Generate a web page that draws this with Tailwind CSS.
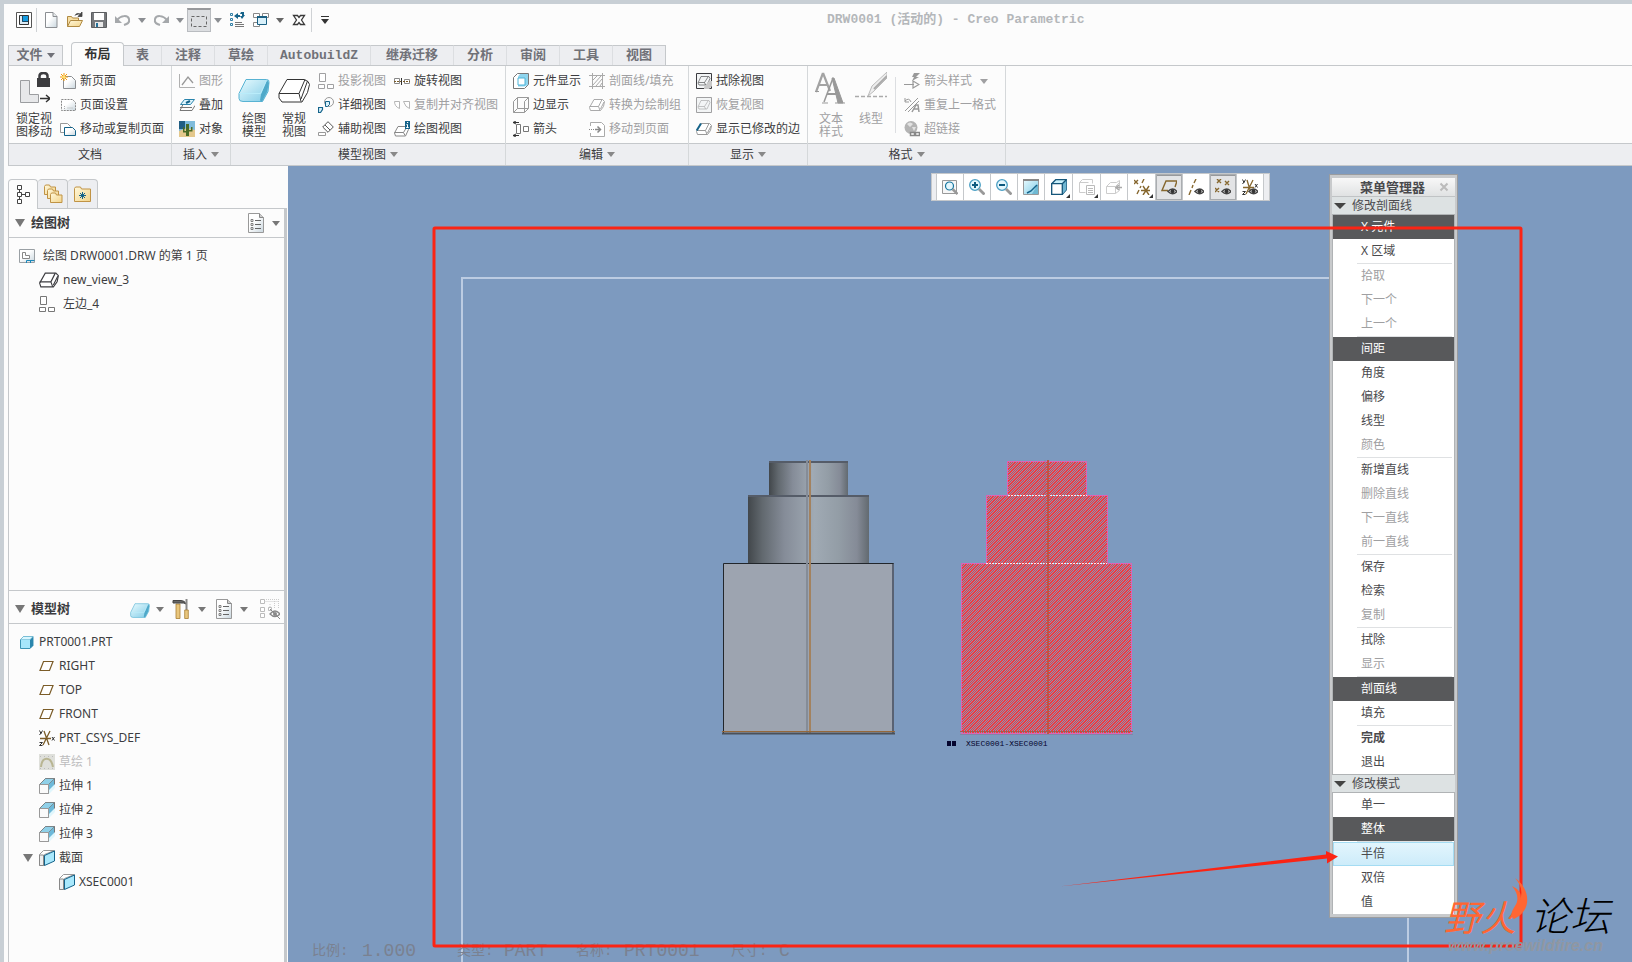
<!DOCTYPE html>
<html lang="zh-CN">

<head>
    <meta charset="UTF-8" />
    <meta name="viewport" content="width=device-width, initial-scale=1.0" />
    <title>DRW0001 (活动的) - Creo Parametric</title>
    <script src="https://cdn.jsdelivr.net/npm/@tailwindcss/browser@4"></script>
</head>

<body class="h-screen overflow-hidden bg-[#fcfcfc] font-['Noto_Sans','Noto_Sans_CJK_SC',sans-serif] text-xs text-[#3c3c40]">

    <!-- icon library -->
    <svg class="absolute size-0">
        <defs>
            <linearGradient id="ice" x1="0" y1="0" x2="1" y2="1">
                <stop offset="0" stop-color="#e9fbff" /><stop offset="1" stop-color="#7fcbe6" />
            </linearGradient>
            <linearGradient id="paper" x1="0" y1="0" x2="1" y2="1">
                <stop offset="0.4" stop-color="#fff" /><stop offset="1" stop-color="#c9d6de" />
            </linearGradient>
            <linearGradient id="gold" x1="0" y1="0" x2="1" y2="1">
                <stop offset="0" stop-color="#fff8dc" /><stop offset="1" stop-color="#f3d48a" />
            </linearGradient>
        </defs>
        <symbol id="down" viewBox="0 0 8 5"><path d="M0 0h8L4 5z" fill="currentColor" /></symbol>
        <symbol id="app" viewBox="0 0 16 16"><path d="M.5.5h15v15H.5z" fill="#fff" stroke="#555" /><path d="M3.500 3.500h9v9h-9z" fill="#159be0" stroke="#333" /><path d="M4 4h2v6h6v2H4z" fill="#dcebf5" /><path d="M6.500 4v5.500H12" fill="none" stroke="#1b4965" /></symbol>
        <symbol id="doc" viewBox="0 0 16 16"><path d="M2.500.5h7.500l4 4v11H2.500z" fill="url(#paper)" stroke="#8b8e92" /><path d="M10 .5v4h4" fill="#e4e8ea" stroke="#8b8e92" /></symbol>
        <symbol id="open" viewBox="0 0 16 16"><path d="M.5 14.500v-10h4l1 1.500h6v3" fill="#f7dfa4" stroke="#b08a43" /><path d="M.5 14.500l3-6h12l-3 6z" fill="url(#gold)" stroke="#b08a43" /><path d="M8 3.500c1-2 3-2.500 5-1.500M15 0v4.500h-4z" fill="#444" stroke="#444" stroke-width=".8" /></symbol>
        <symbol id="save" viewBox="0 0 16 16"><path d="M.5.5h15v15H.5z" fill="#77797c" stroke="#5c5e61" /><path d="M3 1h10v7H3z" fill="#fff" /><path d="M4 10h8v5H4z" fill="#e8e8e8" /><path d="M5 11h2v4H5z" fill="#26729a" /></symbol>
        <symbol id="undo" viewBox="0 0 16 16"><path d="M2 8c4-5 11-5 12-1s-2 5-5 6" fill="none" stroke="#a5a8ab" stroke-width="2" /><path d="M0 4v7h7z" fill="#a5a8ab" /></symbol>
        <symbol id="redo" viewBox="0 0 16 16"><path d="M14 8C10 3 3 3 2 7s2 5 5 6" fill="none" stroke="#a5a8ab" stroke-width="2" /><path d="M16 4v7H9z" fill="#a5a8ab" /></symbol>
        <symbol id="marquee" viewBox="0 0 16 16"><path d="M.5 3.500h15v10H.5z" fill="none" stroke="#666" stroke-dasharray="3 2" /></symbol>
        <symbol id="regen" viewBox="0 0 16 16"><path d="M1.500 1.500h2v2h-2zM1.500 6.500h2v2h-2zM1.500 11.500h2v2h-2z" fill="none" stroke="#2f7fa6" /><path d="M6 10.500h7M6 12.500h9M6 14.500h9" stroke="#777" /><path d="M9 1L5 4l4 3V5h2V3H9zM12 0l3 0v3l1 0-3 4-2-3h2V2h-2z" fill="#15638a" /></symbol>
        <symbol id="windows" viewBox="0 0 16 16"><path d="M.5 1.500h6v4h-6zM9.500 1.500h6v4h-6zM.5 10.500h6v4h-6z" fill="#fff" stroke="#888" /><path d="M4.500 4.500h9v8h-9z" fill="#d8f0fa" stroke="#1a5f82" /><path d="M4 4h10v2H4z" fill="#1a5f82" /></symbol>
        <symbol id="closewin" viewBox="0 0 16 16"><path d="M2.500 3.500h4L8 5.500l1.500-2h4L10.500 8l3 4.500h-4L8 10.500l-1.500 2h-4l3-4.500z" fill="#fff" stroke="#3a3a3a" stroke-width="1.300" /></symbol>

        <symbol id="lock" viewBox="0 0 32 32"><path d="M2.500 8.500h9v14h9v8h-18z" fill="#e7e8ea" stroke="#9b9da0" /><path d="M19 6h13v9H19z" fill="#3c3c3f" /><path d="M21.500 7V4c0-4 8-4 8 0v3" fill="none" stroke="#3c3c3f" stroke-width="2.500" /><path d="M22 26.500h9M28 23l4 3.500-4 3.500" fill="none" stroke="#333" stroke-width="1.400" /></symbol>
        <symbol id="newpage" viewBox="0 0 16 16"><path d="M3.500 3.500h8l4 4v8h-12z" fill="url(#paper)" stroke="#8b8e92" /><path d="M4 0v8M0 4h8M1 1l6 6M7 1L1 7" stroke="#f59a0b" /><circle cx="4" cy="4" r="1.500" fill="#ffe36b" /></symbol>
        <symbol id="pageset" viewBox="0 0 16 16"><path d="M1.500 2.500h11l3 3v8h-14z" fill="url(#paper)" stroke="#888" stroke-dasharray="2 1" /><path d="M4.500 9v4M7.500 11h5" stroke="#aaa" stroke-dasharray="1 1" /></symbol>
        <symbol id="movepage" viewBox="0 0 16 16"><path d="M.5 2.500h7l3 3v6H.5z" fill="#fff" stroke="#999" /><path d="M4.500 6.500h8l3 3v5h-11z" fill="url(#paper)" stroke="#15638a" /></symbol>
        <symbol id="chart" viewBox="0 0 16 16"><path d="M.5 1v13.500H16" fill="none" stroke="#b0b0b0" /><path d="M3 12l6-8 5 6" fill="none" stroke="#999" stroke-width="1.300" /></symbol>
        <symbol id="overlay" viewBox="0 0 16 16"><path d="M5.500 2.500h10l-4 5h-10z" fill="#dff5fd" stroke="#2a84ac" /><path d="M1 10.500h12M4 7.500l-3 6h12l3-5" fill="none" stroke="#777" /><path d="M7 6l4-2" stroke="#15638a" stroke-width="2" /></symbol>
        <symbol id="object" viewBox="0 0 16 16"><path d="M0 0h16v16H0z" fill="#7fbcdc" /><path d="M0 0h6v8H0z" fill="#215e83" /><path d="M0 10l8-3 8 2v7H0z" fill="#e4c88c" /><path d="M7 3h3v12H7zM4 6h1.500v4H7v1.500H4zM10 9h2V6h1.500v4.500H10z" fill="#496b26" /></symbol>
        <symbol id="model" viewBox="0 0 32 32"><path d="M8 7.500h20.500q3 0 2.500 3l-1 9-5.500 10H5q-4 0-4-3v-5z" fill="url(#ice)" stroke="#58b3d3" /><path d="M29 8l2 3-2 9-5 9.500-2-1 1-6z" fill="#4fa9c9" /><path d="M1.500 21.500h21l6-13" fill="none" stroke="#b9ecfa" /></symbol>
        <symbol id="general" viewBox="0 0 32 32"><path d="M9 7.500h17l4 2 1.500 3-2 8-5.500 9.500H4l-3-4v-4.500z" fill="#fff" stroke="#333" /><path d="M1 21.500h20l2 8M21 21.500l6-14M23 27l6.500-18" fill="none" stroke="#333" /></symbol>
        <symbol id="proj" viewBox="0 0 16 16"><path d="M1.500.5h6v8h-6zM.5 11.500h6v4h-6zM9.500 11.500h6v4h-6z" fill="#fff" stroke="currentColor" /></symbol>
        <symbol id="detail" viewBox="0 0 16 16"><circle cx="11" cy="5" r="4.500" fill="none" stroke="#999" /><path d="M7.500 4.500h4v3l-2 2h-2z" fill="#d8f0fa" stroke="#15638a" /><path d="M.5 10.500h4v2l-2 3h-2z" fill="#d8f0fa" stroke="#15638a" stroke-width="1.200" /></symbol>
        <symbol id="auxv" viewBox="0 0 16 16"><path d="M10 .7l5.300 5.300-5.300 5.300L4.700 6z" fill="#fff" stroke="#555" /><path d="M7 4l5 5" stroke="#555" /><path d="M.5 11.500h7v3h-7z" fill="#fff" stroke="#999" /></symbol>
        <symbol id="rotatev" viewBox="0 0 16 16"><path d="M.5 5.500h5v5h-5zM10.500 6.500h5v4h-5z" fill="#fff" stroke="#888" /><path d="M0 8.500h16" stroke="#7b5c28" stroke-dasharray="2 1" /><path d="M7.500 5v7" stroke="#333" /></symbol>
        <symbol id="align" viewBox="0 0 16 16"><path d="M.5 4.500h5v7q-5-2-5-7zM9.500 4.500h6v7q-4-1-6-7z" fill="#fff" stroke="#b5b5b5" /></symbol>
        <symbol id="slab" viewBox="0 0 16 16"><path d="M5 2.500h8.500l2 2-1 5-3 4h-10l-1-3z" fill="#fff" stroke="currentColor" stroke-width=".9" /><path d="M.5 9.500h9l1.500 4M9.500 9.500l3.500-7M11.500 12l3.500-7" fill="none" stroke="currentColor" stroke-width=".9" /></symbol>
        <symbol id="viewinfo" viewBox="0 0 16 16"><path d="M4 5.500h9l1.500 3-3 6.500h-10l-1-3z" fill="#fff" stroke="#888" /><path d="M.5 11.500h9l1.500 3M9.500 11.500l3-5" fill="none" stroke="#888" /><path d="M11 0h5v8h-5z" fill="#15638a" /><path d="M13 1.500h1.200M12.500 3.500h1v3M12.200 6.500h2.500" fill="none" stroke="#fff" /></symbol>
        <symbol id="compdisp" viewBox="0 0 16 16"><path d="M.5 4.500l4-4h11v11l-4 4H.5z" fill="#fff" stroke="#777" /><path d="M5 3.500l2-2.500h8v11l-3.500 1.500H5z" fill="#8fd5ee" /><path d="M5 5h7v7H5z" fill="#fff" stroke="#4db4d8" /></symbol>
        <symbol id="edgedisp" viewBox="0 0 16 16"><path d="M.5 4.500l4-4h11v11l-4 4H.5zM.5 15.500l4-4h11M4.500.5v11M11.500 4.500v11M11.500 4.500l4-4" fill="none" stroke="#999" /></symbol>
        <symbol id="arrows" viewBox="0 0 16 16"><path d="M3.500 3.500h4v9h-4zM10.500 5.500h5v5h-5z" fill="#fff" stroke="#777" /><path d="M0 1.500h6M0 14.500h6M3 0L0 1.500 3 3M3 13l-3 1.500L3 16" fill="none" stroke="#333" /></symbol>
        <symbol id="hatch" viewBox="0 0 16 16"><path d="M3.500 0v16M13.500 0v16M0 2.500h16M0 13.500h16" stroke="#aaa" /><path d="M4 7l4-4M4 12l8-9M7 13l6-7M11 13l2-3" stroke="#aaa" /></symbol>
        <symbol id="toPage" viewBox="0 0 16 16"><path d="M1.500 5V1.500h11l3 3v11h-14V12" fill="#fff" stroke="#aaa" /><path d="M0 8.500h7" stroke="#888" stroke-dasharray="1 1" /><path d="M6 8.500h5M8.500 5.500l3 3-3 3" fill="none" stroke="#888" stroke-width="1.500" /></symbol>
        <symbol id="boxed" viewBox="0 0 16 16"><path d="M.5.5h15v15H.5z" fill="#f3f5f6" stroke="currentColor" /><path d="M5 3.500h8l1 2-3 6.500H3l-1-2zM2.500 9.500h6l1 2.500M8.500 9.500L12 4" fill="none" stroke="currentColor" opacity=".6" /></symbol>
        <symbol id="eraser" viewBox="0 0 16 16"><path d="M8 14l5-6h3v5l-3 3H8z" fill="#c9c9c9" /></symbol>
        <symbol id="slabBlue" viewBox="0 0 16 16"><path d="M5 2.500h8.500l2 2-1 5-3 4h-10l-1-3z" fill="#fff" stroke="#999" /><path d="M.5 9.500h9l1.500 4M9.500 9.500l3.500-7M11.500 12l3.500-7" fill="none" stroke="#999" /><path d="M.7 9.500L5 2.500" stroke="#15638a" stroke-width="2" /></symbol>
        <symbol id="textstyle" viewBox="0 0 32 32"><path d="M8 1L1 20M8 1l7 18M4 13h8" fill="none" stroke="#a3a3a3" stroke-width="2.200" /><path d="M0 19.500h4M7 31h6M20 31h10" stroke="#999" /><path d="M18 6L9 30" stroke="#999" stroke-width="1.500" /><path d="M17 6h2l9 25h-5z" fill="#999" stroke="#999" /><path d="M12 22h11" stroke="#999" stroke-width="2" /></symbol>
        <symbol id="linestyle" viewBox="0 0 32 32"><path d="M0 24.500h32" stroke="#aaa" stroke-width="1.500" stroke-dasharray="4 2" /><path d="M13 24l4-10L32 0v6L19 19z" fill="#eee" stroke="#bbb" /><path d="M19 17L32 4" stroke="#aaa" stroke-width="2" /></symbol>
        <symbol id="arrowstyle" viewBox="0 0 16 16"><path d="M0 11.500h10M9 8l6 3.500L9 15z" fill="none" stroke="#999" stroke-width="1.200" /><path d="M10 0h6l-4 4h3l-7 4 2-4H8z" fill="#999" /></symbol>
        <symbol id="repeat" viewBox="0 0 16 16"><path d="M1 14L14 1M4 15L15 4" stroke="#999" /><path d="M1 1v4h4M1 4q4-4 6 1" fill="none" stroke="#999" /><path d="M8 15l4-7h2l1 7M10 12h5" fill="none" stroke="#999" stroke-width="1.500" /></symbol>
        <symbol id="link" viewBox="0 0 16 16"><circle cx="7" cy="6.500" r="6.500" fill="#b4b4b4" /><path d="M3 3q3-3 6 0l-3 3zM8 6l4 0-2 4z" fill="#e2e2e2" /><path d="M6.500 11.500h4v3h-4zM11.500 11.500h4v3h-4z" fill="#fff" stroke="#888" stroke-width="1.500" /></symbol>

        <symbol id="tree" viewBox="0 0 16 20"><path d="M2.500.5h4v4h-4zM2.500 7.500h4v4h-4zM2.500 14.500h4v4h-4zM10.500 7.500h4v4h-4z" fill="#fff" stroke="#444" /><path d="M4.500 4.500v3M4.500 11.500v3M6.500 9.500h4" stroke="#444" /></symbol>
        <symbol id="folders" viewBox="0 0 20 20"><g fill="url(#gold)" stroke="#c09345"><path d="M1.500 10.500v-8l1-1.500h4l1 2h5v7.500z" /><path d="M4.500 14.500v-8l1-1.500h4l1 2h5v7.500z" /><path d="M7.500 18.500v-8l1-1.500h4l1 2h5.500v7.500z" /></g></symbol>
        <symbol id="folderstar" viewBox="0 0 20 20"><path d="M1.500 17.500v-13l1-1.500h5l1 2h9v12.500z" fill="url(#gold)" stroke="#c09345" /><path d="M9.500 8v7M6 11.500h7M7 9l5 5M12 9l-5 5" stroke="#15638a" /></symbol>
        <symbol id="list" viewBox="0 0 16 20"><path d="M.5.5h11l4 4v15H.5z" fill="url(#paper)" stroke="#999" /><path d="M11.500.5v4h4" fill="#ccc" stroke="#888" /><path d="M7 7.500h6M7 11.500h6M7 15.500h6" stroke="#666" /><path d="M3 6.500h2v2H3zM3 10.500h2v2H3zM3 14.500h2v2H3z" fill="none" stroke="#666" stroke-width=".8" /></symbol>
        <symbol id="sheet" viewBox="0 0 16 16"><path d="M.5 1.500h15v13H.5z" fill="url(#paper)" stroke="#9aa0a4" /><path d="M3.500 4.500h3v3h4v3h-7z" fill="#fff" stroke="#888" /><path d="M7.500 15v-2.500h8M11.500 12.500V15" fill="none" stroke="#1b87b8" /></symbol>
        <symbol id="hammer" viewBox="0 0 18 20"><path d="M4 5h4v14.500H4z" fill="#e9c67c" stroke="#a87f34" stroke-width=".8" /><path d="M1 1.500h8q4 0 5 3.500-2-1.500-5-1H1z" fill="#666" stroke="#444" /><path d="M14.500 0v11" stroke="#888" stroke-width="2" /><path d="M12.700 11h3.600v8.500h-3.600z" fill="#e9c67c" stroke="#a87f34" stroke-width=".8" /></symbol>
        <symbol id="treeoff" viewBox="0 0 20 20"><path d="M.5.5h4v4h-4zM.5 8.500h4v4h-4zM.5 14.500h4v4h-4zM8.500 8.500h3v3h-3z" fill="#fff" stroke="#bbb" /><path d="M4.500 2.500H19M6 .5h13M10 5v3M14.500 2v7M18.500 2v7" stroke="#ccc" stroke-dasharray="1 1" /><path d="M10 15q5-6 10 0-5 5-10 0z" fill="none" stroke="#888" stroke-width="1.300" /><circle cx="15" cy="15" r="2" fill="#888" /><path d="M10 10l10 10" stroke="#888" /></symbol>
        <symbol id="part" viewBox="0 0 16 16"><path d="M1.500 5.500l3-3h9.500v9l-3 3H1.500z" fill="#a6e6fb" stroke="#3b94b5" /><path d="M11 5.500l3-3v9l-3 3z" fill="#2b86ad" /><path d="M1.500 5.500l3-3H14l-3 3z" fill="#d9f7ff" stroke="#6fb9d3" stroke-width=".6" /></symbol>
        <symbol id="plane" viewBox="0 0 16 16"><path d="M4.500 3.500h9.500l-3.500 9H1z" fill="#fff" stroke="#7b5c28" stroke-width="1.200" /></symbol>
        <symbol id="csys" viewBox="0 0 16 16"><path d="M1 8.500h11M5 1l5 14M11 1L4 15" fill="none" stroke="#7b5c28" stroke-width="1.300" /><path d="M.5.5l1.500 3 1.500-3M2 3l-1.500 2M.5 12.500h3l-3 3h3M13 7l2.500 3.500M15.500 7L13 10.500" fill="none" stroke="#333" /></symbol>
        <symbol id="sketch" viewBox="0 0 16 16"><path d="M0 0h16v16H0z" fill="#dedfda" /><path d="M2 13C3 2 12 2 14 13" fill="none" stroke="#b8b592" stroke-width="2" /><path d="M1 2.500h15M1 14.500h15" stroke="#bbb" stroke-dasharray="1 3" /></symbol>
        <symbol id="extrude" viewBox="0 0 16 16"><path d="M.5 6.500l6-6h9v9l-6 6z" fill="#6db9d9" stroke="#777" /><path d="M10 16l6-6V6l-6 6z" fill="#e0f6fc" /><path d="M.5 6.500l6-6h9l-6 6z" fill="#8fd0e8" stroke="#777" stroke-width=".7" /><path d="M.5 6.500h9v9h-9z" fill="#fafafa" stroke="#999" /></symbol>
        <symbol id="section" viewBox="0 0 16 16"><path d="M.5 4.500l4-4h11l-10 4v11h-5z" fill="#fff" stroke="#999" /><path d="M.5 5h4v10.500h-4z" fill="#eee" stroke="#888" /><path d="M5.500 5.500l10-4.500v10l-10 4.500z" fill="#a9e8fc" stroke="#15638a" /></symbol>

        <symbol id="eye" viewBox="0 0 16 16"><path d="M7 12.500q4.500-5 9 0-4.500 4.500-9 0z" fill="#fff" stroke="#444" stroke-width="1.500" /><circle cx="11.500" cy="12.300" r="2" fill="#333" /></symbol>
        <symbol id="refit" viewBox="0 0 16 16"><path d="M.5 1.500h14v13H.5z" fill="#f7f7f7" stroke="#999" /><circle cx="7.500" cy="7" r="4" fill="#e5f7fd" stroke="#15759f" stroke-width="1.200" /><path d="M10.500 10l5 5" stroke="#999" stroke-width="2.500" /></symbol>
        <symbol id="zin" viewBox="0 0 16 16"><circle cx="6" cy="6" r="5.300" fill="#e5f7fd" stroke="#4a9fc4" stroke-width="1.300" /><path d="M6 3v6M3 6h6" stroke="#0d5a80" stroke-width="2" /><path d="M10 10l5.500 5.500" stroke="#999" stroke-width="2.800" /></symbol>
        <symbol id="zout" viewBox="0 0 16 16"><circle cx="6" cy="6" r="5.300" fill="#e5f7fd" stroke="#4a9fc4" stroke-width="1.300" /><path d="M3 6h6" stroke="#0d5a80" stroke-width="2" /><path d="M10 10l5.500 5.500" stroke="#999" stroke-width="2.800" /></symbol>
        <symbol id="repaint" viewBox="0 0 16 16"><path d="M.5.5h15v15H.5z" fill="url(#ice)" stroke="#999" /><path d="M9 15l6-10v10z" fill="#6fb9d3" /><path d="M14 6l-6 6-4 2" fill="none" stroke="#15638a" stroke-width="1.500" /><path d="M0 1h16" stroke="#888" stroke-width="2" /></symbol>
        <symbol id="cube" viewBox="0 0 16 16"><path d="M.7 4.700l4-4h10.600v10l-4 4.600H.7z" fill="#c8f0fb" stroke="#15567a" stroke-width="1.300" /><path d="M11.300 4.700l4-4v10l-4 4.600z" fill="#6fb6d2" /><path d="M.7 4.700h10.600v10.600H.7z" fill="#fff" stroke="#15567a" stroke-width="1.300" /><path d="M11.300 4.700l4-4" fill="none" stroke="#15567a" stroke-width="1.300" /></symbol>
        <symbol id="saved" viewBox="0 0 16 16"><path d="M.5 3.500l3-3h10v4M.5 3.500v10h6M.5 3.500h9" fill="none" stroke="#ccc" /><path d="M7.500 6.500h8v9h-8z" fill="#fff" stroke="#bbb" /><path d="M9 9.500h5M9 11.500h5M9 13.500h5" stroke="#bbb" /></symbol>
        <symbol id="vmgr" viewBox="0 0 16 16"><path d="M.5 7.500l4-4h6l3-2v10l-4 3h-9zM.5 7.500h9v7M9.500 7.500l4-4" fill="none" stroke="#ccc" /><path d="M16 8.500h-5M13 6l-3 2.500 3 2.500" fill="none" stroke="#aaa" stroke-width="1.600" /></symbol>
        <symbol id="datum" viewBox="0 0 16 16"><path d="M0 1l4 4M4 1L0 5M10 0L8 4M7 7l-1 2M5 11l-2 4M7 11.500h9M9 7l6 9M15 7l-6 9" stroke="#86672e" stroke-width="1.400" /></symbol>
        <symbol id="planeEye" viewBox="0 0 16 16"><path d="M14 8l2-6H5L1 11.500h6" fill="none" stroke="#86672e" stroke-width="1.400" /><use href="#eye" /></symbol>
        <symbol id="axisEye" viewBox="0 0 16 16"><path d="M8 0L6 4M5 6L4 9M3 11l-2 5" stroke="#86672e" stroke-width="1.400" /><use href="#eye" /></symbol>
        <symbol id="pointEye" viewBox="0 0 16 16"><path d="M2 0l4 4M6 0L2 4M10 2l4 4M14 2l-4 4M0 9l4 4M4 9l-4 4" stroke="#86672e" stroke-width="1.400" /><use href="#eye" /></symbol>
        <symbol id="csysEye" viewBox="0 0 16 16"><path d="M1 8.500h11M5 1l4 13M11 1L4 15" fill="none" stroke="#86672e" stroke-width="1.300" /><path d="M.5.500l1.500 3 1.500-3M2 3l-1.500 2M.5 12.500h3l-3 3h3M13 5l2.500 3.500M15.500 5L13 8.500" fill="none" stroke="#333" /><use href="#eye" /></symbol>
    </svg>

    <div class="flex h-full flex-col border-t-4 border-l-4 border-[#c8cfd5]">

        <!-- quick access + title -->
        <header class="relative flex h-[38px] shrink-0 items-center pb-1.5 pl-2 text-[#8b8e92]">
            <button aria-label="Creo" class="flex w-6 justify-center"><svg class="size-4"><use href="#app" /></svg></button>
            <i class="mr-0.5 h-6 w-px bg-[#cfd2d5]"></i>
            <button aria-label="新建" class="flex w-6 justify-center"><svg class="size-4"><use href="#doc" /></svg></button>
            <button aria-label="打开" class="flex w-6 justify-center"><svg class="size-4"><use href="#open" /></svg></button>
            <button aria-label="保存" class="flex w-6 justify-center"><svg class="size-4"><use href="#save" /></svg></button>
            <button aria-label="撤消" class="flex w-6 justify-center"><svg class="size-4"><use href="#undo" /></svg></button>
            <button aria-label="撤消列表" class="flex w-3.5 justify-center"><svg class="h-[5px] w-2"><use href="#down" /></svg></button>
            <button aria-label="重做" class="flex w-6 justify-center"><svg class="size-4"><use href="#redo" /></svg></button>
            <button aria-label="重做列表" class="flex w-3.5 justify-center"><svg class="h-[5px] w-2"><use href="#down" /></svg></button>
            <button aria-label="选择" class="flex h-6 w-6 items-center justify-center border border-t-2 border-[#b9bcc0] border-t-[#97999c] bg-[#dcdee1]"><svg class="size-4"><use href="#marquee" /></svg></button>
            <button aria-label="选择列表" class="flex w-3.5 justify-center"><svg class="h-[5px] w-2"><use href="#down" /></svg></button>
            <button aria-label="重新生成" class="flex w-6 justify-center"><svg class="size-4"><use href="#regen" /></svg></button>
            <button aria-label="窗口" class="flex w-6 justify-center"><svg class="size-4"><use href="#windows" /></svg></button>
            <button aria-label="窗口列表" class="flex w-3.5 justify-center text-[#666]"><svg class="h-[5px] w-2"><use href="#down" /></svg></button>
            <button aria-label="关闭" class="flex w-6 justify-center"><svg class="size-4"><use href="#closewin" /></svg></button>
            <i class="h-6 w-px bg-[#cfd2d5]"></i>
            <button aria-label="自定义" class="ml-2 flex w-2.5 flex-col items-center text-[#333]"><i class="mb-0.5 h-px w-2 bg-[#333]"></i><svg class="h-[5px] w-2"><use href="#down" /></svg></button>
            <h1 class="absolute left-[823px] whitespace-pre font-['Liberation_Mono','Noto_Sans_CJK_SC',monospace] text-[13px] font-bold text-[#b4b7ba]">DRW0001 (活动的) - Creo Parametric</h1>
        </header>

        <!-- ribbon tabs -->
        <nav class="ml-1 flex h-6 shrink-0 items-end border-b border-[#c5c8cb] font-['Liberation_Mono','Noto_Sans_CJK_SC',monospace] text-[13px] font-bold text-[#707178]">
            <button class="mr-2 flex h-5 w-[55px] items-center justify-center gap-1 border border-b-0 border-[#c5c8cb] bg-[#edeef1]">文件<svg class="h-[5px] w-2"><use href="#down" /></svg></button>
            <button class="-mb-px h-6 w-[53px] rounded-t-sm border border-b-0 border-[#c5c8cb] bg-[#fcfcfc] text-[#333]">布局</button>
            <button class="h-5 w-[38px] border-t border-r border-[#c5c8cb] border-r-[#dcdee1] bg-[#edeef1]">表</button>
            <button class="h-5 w-[53px] border-t border-r border-[#c5c8cb] border-r-[#dcdee1] bg-[#edeef1]">注释</button>
            <button class="h-5 w-[53px] border-t border-r border-[#c5c8cb] border-r-[#dcdee1] bg-[#edeef1]">草绘</button>
            <button class="h-5 w-[103px] border-t border-r border-[#c5c8cb] border-r-[#dcdee1] bg-[#edeef1]">AutobuildZ</button>
            <button class="h-5 w-[83px] border-t border-r border-[#c5c8cb] border-r-[#dcdee1] bg-[#edeef1]">继承迁移</button>
            <button class="h-5 w-[53px] border-t border-r border-[#c5c8cb] border-r-[#dcdee1] bg-[#edeef1]">分析</button>
            <button class="h-5 w-[53px] border-t border-r border-[#c5c8cb] border-r-[#dcdee1] bg-[#edeef1]">审阅</button>
            <button class="h-5 w-[53px] border-t border-r border-[#c5c8cb] border-r-[#dcdee1] bg-[#edeef1]">工具</button>
            <button class="h-5 w-[53px] border-t border-r border-[#c5c8cb] bg-[#edeef1]">视图</button>
        </nav>

        <!-- ribbon -->
        <div class="ml-1 flex h-[100px] shrink-0 whitespace-nowrap border-b border-l border-[#c5c8cb]">
            <section class="flex w-[163px] flex-col border-r border-[#d5d8da]">
                <div class="flex flex-1 gap-2 pl-[7px] pt-[3px]">
                    <button class="flex w-9 flex-col items-center gap-2 pt-[3px] leading-[13px]"><svg class="size-8"><use href="#lock" /></svg><span>锁定视<br>图移动</span></button>
                    <div>
                        <button class="flex h-6 items-center gap-1"><svg class="size-4"><use href="#newpage" /></svg>新页面</button>
                        <button class="flex h-6 items-center gap-1"><svg class="size-4"><use href="#pageset" /></svg>页面设置</button>
                        <button class="flex h-6 items-center gap-1"><svg class="size-4"><use href="#movepage" /></svg>移动或复制页面</button>
                    </div>
                </div>
                <h2 class="flex h-[22px] items-center justify-center border-t border-[#c5c8cb] bg-[#edeef1]">文档</h2>
            </section>
            <section class="flex w-[59px] flex-col border-r border-[#d5d8da]">
                <div class="flex-1 pl-[7px] pt-[3px]">
                    <button disabled class="flex h-6 items-center gap-1 text-[#a0a0a2]"><svg class="size-4"><use href="#chart" /></svg>图形</button>
                    <button class="flex h-6 items-center gap-1"><svg class="size-4"><use href="#overlay" /></svg>叠加</button>
                    <button class="flex h-6 items-center gap-1"><svg class="size-4"><use href="#object" /></svg>对象</button>
                </div>
                <button class="flex h-[22px] items-center justify-center gap-1 border-t border-[#c5c8cb] bg-[#edeef1]">插入<svg class="h-[5px] w-2 text-[#888]"><use href="#down" /></svg></button>
            </section>
            <section class="flex w-[275px] flex-col border-r border-[#d5d8da]">
                <div class="flex flex-1 gap-2 pl-[7px] pt-[3px]">
                    <button class="flex w-8 flex-col items-center gap-2 pt-[3px] leading-[13px]"><svg class="size-8"><use href="#model" /></svg><span>绘图<br>模型</span></button>
                    <button class="flex w-8 flex-col items-center gap-2 pt-[3px] leading-[13px]"><svg class="size-8"><use href="#general" /></svg><span>常规<br>视图</span></button>
                    <div>
                        <button disabled class="flex h-6 items-center gap-1 text-[#a0a0a2]"><svg class="size-4"><use href="#proj" /></svg>投影视图</button>
                        <button class="flex h-6 items-center gap-1"><svg class="size-4"><use href="#detail" /></svg>详细视图</button>
                        <button class="flex h-6 items-center gap-1"><svg class="size-4"><use href="#auxv" /></svg>辅助视图</button>
                    </div>
                    <div>
                        <button class="flex h-6 items-center gap-1"><svg class="size-4"><use href="#rotatev" /></svg>旋转视图</button>
                        <button disabled class="flex h-6 items-center gap-1 text-[#a0a0a2]"><svg class="size-4"><use href="#align" /></svg>复制并对齐视图</button>
                        <button class="flex h-6 items-center gap-1"><svg class="size-4"><use href="#viewinfo" /></svg>绘图视图</button>
                    </div>
                </div>
                <button class="flex h-[22px] items-center justify-center gap-1 border-t border-[#c5c8cb] bg-[#edeef1]">模型视图<svg class="h-[5px] w-2 text-[#888]"><use href="#down" /></svg></button>
            </section>
            <section class="flex w-[183px] flex-col border-r border-[#d5d8da]">
                <div class="flex flex-1 gap-2 pl-[7px] pt-[3px]">
                    <div>
                        <button class="flex h-6 items-center gap-1"><svg class="size-4"><use href="#compdisp" /></svg>元件显示</button>
                        <button class="flex h-6 items-center gap-1"><svg class="size-4"><use href="#edgedisp" /></svg>边显示</button>
                        <button class="flex h-6 items-center gap-1"><svg class="size-4"><use href="#arrows" /></svg>箭头</button>
                    </div>
                    <div class="text-[#a0a0a2]">
                        <button disabled class="flex h-6 items-center gap-1"><svg class="size-4"><use href="#hatch" /></svg>剖面线/填充</button>
                        <button disabled class="flex h-6 items-center gap-1"><svg class="size-4"><use href="#slab" /></svg>转换为绘制组</button>
                        <button disabled class="flex h-6 items-center gap-1"><svg class="size-4"><use href="#toPage" /></svg>移动到页面</button>
                    </div>
                </div>
                <button class="flex h-[22px] items-center justify-center gap-1 border-t border-[#c5c8cb] bg-[#edeef1]">编辑<svg class="h-[5px] w-2 text-[#888]"><use href="#down" /></svg></button>
            </section>
            <section class="flex w-[119px] flex-col border-r border-[#d5d8da]">
                <div class="flex-1 pl-[7px] pt-[3px]">
                    <button class="flex h-6 items-center gap-1"><svg class="size-4"><use href="#boxed" /><use href="#eraser" /></svg>拭除视图</button>
                    <button disabled class="flex h-6 items-center gap-1 text-[#a0a0a2]"><svg class="size-4"><use href="#boxed" /></svg>恢复视图</button>
                    <button class="flex h-6 items-center gap-1"><svg class="size-4"><use href="#slabBlue" /></svg>显示已修改的边</button>
                </div>
                <button class="flex h-[22px] items-center justify-center gap-1 border-t border-[#c5c8cb] bg-[#edeef1]">显示<svg class="h-[5px] w-2 text-[#888]"><use href="#down" /></svg></button>
            </section>
            <section class="flex w-[198px] flex-col border-r border-[#d5d8da]">
                <div class="flex flex-1 gap-2 pl-[7px] pt-[3px] text-[#a0a0a2]">
                    <button disabled class="flex w-8 flex-col items-center gap-2 pt-[3px] leading-[13px]"><svg class="size-8"><use href="#textstyle" /></svg><span>文本<br>样式</span></button>
                    <button disabled class="flex w-8 flex-col items-center gap-2 pt-[3px] leading-[13px]"><svg class="size-8"><use href="#linestyle" /></svg><span>线型</span></button>
                    <i class="mt-2 h-14 w-px bg-[#dcdee1]"></i>
                    <div>
                        <button disabled class="flex h-6 items-center gap-1"><svg class="size-4"><use href="#arrowstyle" /></svg>箭头样式<svg class="ml-1 h-[5px] w-2"><use href="#down" /></svg></button>
                        <button disabled class="flex h-6 items-center gap-1"><svg class="size-4"><use href="#repeat" /></svg>重复上一格式</button>
                        <button disabled class="flex h-6 items-center gap-1"><svg class="size-4"><use href="#link" /></svg>超链接</button>
                    </div>
                </div>
                <button class="flex h-[22px] items-center justify-center gap-1 border-t border-[#c5c8cb] bg-[#edeef1]">格式<svg class="h-[5px] w-2 text-[#888]"><use href="#down" /></svg></button>
            </section>
            <div class="flex flex-1 flex-col justify-end"><div class="h-[22px] border-t border-[#c5c8cb] bg-[#edeef1]"></div></div>
        </div>

        <div class="flex min-h-0 flex-1">
            <!-- navigator -->
            <aside class="flex w-[284px] shrink-0 flex-col pl-1 pt-[13px] pr-px">
                <div class="flex h-[29px]">
                    <button aria-label="模型树" class="z-10 flex h-[30px] w-[30px] items-center justify-center rounded-t-sm border border-b-0 border-[#c5c8cb] bg-[#fcfcfc]"><svg class="h-5 w-4"><use href="#tree" /></svg></button>
                    <button aria-label="文件夹" class="flex w-[30px] items-center justify-center rounded-t-sm border-t border-r border-[#c5c8cb] bg-[#edeef1]"><svg class="size-5"><use href="#folders" /></svg></button>
                    <button aria-label="收藏夹" class="flex w-[30px] items-center justify-center rounded-t-sm border-t border-r border-[#c5c8cb] bg-[#edeef1]"><svg class="size-5"><use href="#folderstar" /></svg></button>
                </div>
                <div class="flex min-h-0 flex-1 flex-col border-t border-r-3 border-l border-[#c5c8cb]">
                    <div class="flex h-[29px] shrink-0 items-center border-b border-[#c5c8cb] pl-1.5 pr-1">
                        <svg class="mr-1.5 h-2 w-2.5 text-[#777]" viewBox="0 0 10 8"><path d="M0 0h10L5 8z" fill="currentColor" /></svg>
                        <h2 class="flex-1 text-[13px] font-bold">绘图树</h2>
                        <button aria-label="设置" class="mr-2"><svg class="h-5 w-4"><use href="#list" /></svg></button>
                        <button aria-label="设置列表" class="text-[#777]"><svg class="h-[5px] w-2"><use href="#down" /></svg></button>
                    </div>
                    <ul class="h-[352px] shrink-0 pl-2.5 pt-1.5">
                        <li class="flex h-6 items-center gap-2"><svg class="size-4"><use href="#sheet" /></svg>绘图 DRW0001.DRW 的第 1 页</li>
                        <li class="ml-5 flex h-6 items-center gap-1"><svg class="h-5 w-5"><use href="#slab" /></svg>new_view_3</li>
                        <li class="ml-5 flex h-6 items-center gap-2"><svg class="size-4 text-[#777]"><use href="#proj" /></svg>左边_4</li>
                    </ul>
                    <div class="flex h-[34px] shrink-0 items-center border-y border-[#c5c8cb] pt-1 pl-1.5 pr-1 text-[#777]">
                        <svg class="mr-1.5 h-2 w-2.5" viewBox="0 0 10 8"><path d="M0 0h10L5 8z" fill="currentColor" /></svg>
                        <h2 class="flex-1 text-[13px] font-bold text-[#3c3c40]">模型树</h2>
                        <button aria-label="显示" class="mr-1.5"><svg class="size-5"><use href="#model" /></svg></button>
                        <button aria-label="显示列表" class="mr-2"><svg class="h-[5px] w-2"><use href="#down" /></svg></button>
                        <button aria-label="工具" class="mr-2"><svg class="h-5 w-[18px]"><use href="#hammer" /></svg></button>
                        <button aria-label="工具列表" class="mr-2.5"><svg class="h-[5px] w-2"><use href="#down" /></svg></button>
                        <button aria-label="设置" class="mr-2"><svg class="h-5 w-4"><use href="#list" /></svg></button>
                        <button aria-label="设置列表" class="mr-3"><svg class="h-[5px] w-2"><use href="#down" /></svg></button>
                        <button aria-label="隐藏"><svg class="size-5"><use href="#treeoff" /></svg></button>
                    </div>
                    <ul class="pl-2.5 pt-1.5">
                        <li class="flex h-6 items-center gap-1"><svg class="size-4"><use href="#part" /></svg>PRT0001.PRT</li>
                        <li class="ml-5 flex h-6 items-center gap-1"><svg class="size-4"><use href="#plane" /></svg>RIGHT</li>
                        <li class="ml-5 flex h-6 items-center gap-1"><svg class="size-4"><use href="#plane" /></svg>TOP</li>
                        <li class="ml-5 flex h-6 items-center gap-1"><svg class="size-4"><use href="#plane" /></svg>FRONT</li>
                        <li class="ml-5 flex h-6 items-center gap-1"><svg class="size-4"><use href="#csys" /></svg>PRT_CSYS_DEF</li>
                        <li class="ml-5 flex h-6 items-center gap-1 text-[#bcbcbe]"><svg class="size-4"><use href="#sketch" /></svg>草绘 1</li>
                        <li class="ml-5 flex h-6 items-center gap-1"><svg class="size-4"><use href="#extrude" /></svg>拉伸 1</li>
                        <li class="ml-5 flex h-6 items-center gap-1"><svg class="size-4"><use href="#extrude" /></svg>拉伸 2</li>
                        <li class="ml-5 flex h-6 items-center gap-1"><svg class="size-4"><use href="#extrude" /></svg>拉伸 3</li>
                        <li class="ml-1 flex h-6 items-center gap-1"><svg class="mr-0.5 h-2 w-2.5 text-[#777]" viewBox="0 0 10 8"><path d="M0 0h10L5 8z" fill="currentColor" /></svg><svg class="size-4"><use href="#section" /></svg>截面</li>
                        <li class="ml-10 flex h-6 items-center gap-1"><svg class="size-4"><use href="#section" /></svg>XSEC0001</li>
                    </ul>
                </div>
            </aside>

            <!-- graphics area -->
            <main class="relative flex-1 overflow-hidden bg-[#7d9abf]">
                <svg class="absolute inset-0 h-full w-full">
                    <defs>
                        <linearGradient id="cyl">
                            <stop offset="0" stop-color="#42474b" /><stop offset=".12" stop-color="#62696f" /><stop offset=".3" stop-color="#858c98" />
                            <stop offset=".55" stop-color="#a0aab4" /><stop offset=".75" stop-color="#939da6" /><stop offset=".9" stop-color="#858b97" /><stop offset="1" stop-color="#626a70" />
                        </linearGradient>
                        <linearGradient id="stripe" gradientUnits="userSpaceOnUse" x1=".25" y1=".25" x2="6.250" y2="6.250" spreadMethod="repeat">
                            <stop offset="0" stop-color="#fb3337" /><stop offset=".1667" stop-color="#fb3337" />
                            <stop offset=".1667" stop-color="#7d9abf" /><stop offset=".25" stop-color="#7d9abf" />
                            <stop offset=".25" stop-color="#fb3337" /><stop offset=".3333" stop-color="#fb3337" />
                            <stop offset=".3333" stop-color="#7d9abf" /><stop offset=".4167" stop-color="#7d9abf" />
                            <stop offset=".4167" stop-color="#fb3337" /><stop offset=".5833" stop-color="#fb3337" />
                            <stop offset=".5833" stop-color="#7d9abf" /><stop offset=".6667" stop-color="#7d9abf" />
                            <stop offset=".6667" stop-color="#fb3337" /><stop offset=".75" stop-color="#fb3337" />
                            <stop offset=".75" stop-color="#7d9abf" /><stop offset=".8333" stop-color="#7d9abf" />
                            <stop offset=".8333" stop-color="#fb3337" /><stop offset=".9167" stop-color="#fb3337" />
                            <stop offset=".9167" stop-color="#7d9abf" /><stop offset="1" stop-color="#7d9abf" />
                        </linearGradient>
                    </defs>
                    <g transform="translate(-288 -166)">
                        <!-- sheet border -->
                        <path d="M462 970V278H1408V970" fill="none" stroke="#bccce2" stroke-width="2" />
                        <!-- front view -->
                        <path d="M769 461h79v34h-79z" fill="url(#cyl)" />
                        <path d="M748 495h121v68H748z" fill="url(#cyl)" />
                        <path d="M769 462h79M748 496h121" stroke="#555c68" stroke-width="2" />
                        <path d="M723.500 563.500h170v170h-170z" fill="#9da4b0" stroke="#22262b" />
                        <path d="M893 564v170" stroke="#596273" stroke-width="2" />
                        <path d="M807 460v274" stroke="#858c97" stroke-width="2" />
                        <path d="M810 460v274" stroke="#a3825f" stroke-width="2" />
                        <path d="M722 731.500h173" stroke="#96683a" />
                        <path d="M722 733.500h173" stroke="#4b5059" stroke-width="2" />
                        <!-- section view -->
                        <path d="M1007.500 461.500h79v34h21v68h24v170h-170v-170h25v-68h21z" fill="url(#stripe)" stroke="#df62b4" />
                        <path d="M1008 495.500h79M986 563.500h121" stroke="#f4e9f2" stroke-dasharray="2 1" />
                        <path d="M1045 460v274" stroke="#8b7292" opacity=".5" />
                        <path d="M1048 460v274" stroke="#bd5545" stroke-width="2" />
                        <path d="M960 731.500h173" stroke="#a85a4b" />
                        <path d="M960 734.500h173" stroke="#8186a5" />
                        <path d="M947 741h4v5h-4zM952 741h4v5h-4z" fill="#05052e" />
                        <text x="966" y="746" fill="#05052e" class="font-['Liberation_Mono',monospace] text-[8px]">XSEC0001-XSEC0001</text>
                        <g fill="#7a8190" class="font-['Liberation_Mono','Noto_Sans_CJK_SC',monospace] text-lg">
                            <text x="312" y="955" class="text-sm">比例:</text>
                            <text x="362" y="956">1.000</text>
                            <text x="457" y="955" class="text-sm">类型:</text>
                            <text x="504" y="956">PART</text>
                            <text x="576" y="955" class="text-sm">名称:</text>
                            <text x="624" y="956">PRT0001</text>
                            <text x="731" y="955" class="text-sm">尺寸:</text>
                            <text x="779" y="956">C</text>
                        </g>
                    </g>
                </svg>

                <div class="absolute top-[7px] left-[643px] flex h-7 divide-x divide-[#c5c8cb] border border-[#c5c8cb] bg-white">
                    <i class="w-[5px] bg-[#edeef1]"></i>
                    <button aria-label="重新调整" class="flex w-[27px] items-center justify-center"><svg class="size-4"><use href="#refit" /></svg></button>
                    <button aria-label="放大" class="flex w-[27px] items-center justify-center"><svg class="size-4"><use href="#zin" /></svg></button>
                    <button aria-label="缩小" class="flex w-[27px] items-center justify-center"><svg class="size-4"><use href="#zout" /></svg></button>
                    <button aria-label="重画" class="flex w-[27px] items-center justify-center"><svg class="size-4"><use href="#repaint" /></svg></button>
                    <button aria-label="显示样式" class="relative flex w-7 items-center justify-center"><svg class="size-4"><use href="#cube" /></svg><svg class="absolute right-0.5 bottom-0.5 size-1" viewBox="0 0 4 4"><path d="M4 0v4H0z" fill="#333" /></svg></button>
                    <button aria-label="已保存视图" disabled class="relative flex w-7 items-center justify-center"><svg class="size-4"><use href="#saved" /></svg><svg class="absolute right-0.5 bottom-0.5 size-1" viewBox="0 0 4 4"><path d="M4 0v4H0z" fill="#333" /></svg></button>
                    <button aria-label="视图管理器" disabled class="flex w-[27px] items-center justify-center"><svg class="size-4"><use href="#vmgr" /></svg></button>
                    <button aria-label="基准显示" class="relative flex w-7 items-center justify-center"><svg class="size-4"><use href="#datum" /></svg><svg class="absolute right-0.5 bottom-0.5 size-1" viewBox="0 0 4 4"><path d="M4 0v4H0z" fill="#333" /></svg></button>
                    <button aria-label="平面显示" class="flex w-[27px] items-center justify-center bg-[#e3e4e6] shadow-[inset_0_0_0_1px_#aaadb0,inset_0_2px_0_#97999c]"><svg class="size-4"><use href="#planeEye" /></svg></button>
                    <button aria-label="轴显示" class="flex w-[27px] items-center justify-center"><svg class="size-4"><use href="#axisEye" /></svg></button>
                    <button aria-label="点显示" class="flex w-[27px] items-center justify-center bg-[#e3e4e6] shadow-[inset_0_0_0_1px_#aaadb0,inset_0_2px_0_#97999c]"><svg class="size-4"><use href="#pointEye" /></svg></button>
                    <button aria-label="坐标系显示" class="flex w-[27px] items-center justify-center"><svg class="size-4"><use href="#csysEye" /></svg></button>
                    <i class="w-[5px] bg-[#edeef1]"></i>
                </div>

                <!-- menu manager -->
                <div class="absolute top-2 right-[174px] w-[129px] border border-[#9a9c9f] bg-[#c8cacc] px-0.5 pt-[3px] pb-[3px] text-[#4a4a4d]">
                    <div class="flex h-[19px] items-center border-b border-[#c0c3c5] bg-linear-to-b from-[#f8f8f8] to-[#e0e2e3]">
                        <h2 class="flex-1 pl-7 text-[13px] leading-4 font-bold">菜单管理器</h2>
                        <button aria-label="关闭" class="mr-1.5"><svg class="size-2.5" viewBox="0 0 10 10"><path d="M1.500 1.500l7 7M8.500 1.500l-7 7" stroke="#bbb" stroke-width="2" /></svg></button>
                    </div>
                    <h3 class="flex h-[18px] items-center gap-1.5 border-b border-[#b0b3b5] bg-[#dde2e3] pl-0.5"><svg class="h-1.5 w-3" viewBox="0 0 12 6"><path d="M0 0h12L6 6z" fill="#444" /></svg>修改剖面线</h3>
                    <div class="flex flex-col border-x border-[#b0b3b5] bg-white">
                        <button class="h-6 bg-[#58595b] pl-7 text-left text-white">X 元件</button>
                        <button class="h-6 pl-7 text-left">X 区域</button>
                        <hr class="ml-6 mr-0.5 border-[#dfe1e3]">
                        <button disabled class="h-6 pl-7 text-left text-[#a0a0a2]">拾取</button>
                        <button disabled class="h-6 pl-7 text-left text-[#a0a0a2]">下一个</button>
                        <button disabled class="h-6 pl-7 text-left text-[#a0a0a2]">上一个</button>
                        <hr class="ml-6 mr-0.5 border-[#dfe1e3]">
                        <button class="h-6 bg-[#58595b] pl-7 text-left text-white">间距</button>
                        <button class="h-6 pl-7 text-left">角度</button>
                        <button class="h-6 pl-7 text-left">偏移</button>
                        <button class="h-6 pl-7 text-left">线型</button>
                        <button disabled class="h-6 pl-7 text-left text-[#a0a0a2]">颜色</button>
                        <hr class="ml-6 mr-0.5 border-[#dfe1e3]">
                        <button class="h-6 pl-7 text-left">新增直线</button>
                        <button disabled class="h-6 pl-7 text-left text-[#a0a0a2]">删除直线</button>
                        <button disabled class="h-6 pl-7 text-left text-[#a0a0a2]">下一直线</button>
                        <button disabled class="h-6 pl-7 text-left text-[#a0a0a2]">前一直线</button>
                        <hr class="ml-6 mr-0.5 border-[#dfe1e3]">
                        <button class="h-6 pl-7 text-left">保存</button>
                        <button class="h-6 pl-7 text-left">检索</button>
                        <button disabled class="h-6 pl-7 text-left text-[#a0a0a2]">复制</button>
                        <hr class="ml-6 mr-0.5 border-[#dfe1e3]">
                        <button class="h-6 pl-7 text-left">拭除</button>
                        <button disabled class="h-6 pl-7 text-left text-[#a0a0a2]">显示</button>
                        <hr class="ml-6 mr-0.5 border-[#dfe1e3]">
                        <button class="h-6 bg-[#58595b] pl-7 text-left text-white">剖面线</button>
                        <button class="h-6 pl-7 text-left">填充</button>
                        <hr class="ml-6 mr-0.5 border-[#dfe1e3]">
                        <button class="h-6 pl-7 text-left font-bold">完成</button>
                        <button class="h-6 pl-7 text-left">退出</button>
                    </div>
                    <h3 class="flex h-[19px] items-center gap-1.5 border-y border-[#b0b3b5] bg-[#dde2e3] pl-0.5"><svg class="h-1.5 w-3" viewBox="0 0 12 6"><path d="M0 0h12L6 6z" fill="#444" /></svg>修改模式</h3>
                    <div class="flex flex-col border-x border-[#b0b3b5] bg-white">
                        <button class="h-6 pl-7 text-left">单一</button>
                        <button class="h-6 bg-[#58595b] pl-7 text-left text-white">整体</button>
                        <hr class="ml-6 mr-0.5 border-[#dfe1e3]">
                        <button class="h-6 border border-[#a4dcf3] bg-linear-to-b from-[#e3f5fd] to-[#cdecfa] pl-[27px] text-left">半倍</button>
                        <button class="h-6 pl-7 text-left">双倍</button>
                        <button class="h-6 pl-7 text-left">值</button>
                    </div>
                </div>

                <!-- annotations -->
                <svg class="pointer-events-none absolute inset-0 h-full w-full">
                    <g transform="translate(-288 -166)">
                        <rect x="434" y="228" width="1087" height="718" rx="1" fill="none" stroke="#fb2414" stroke-width="3" />
                        <path d="M1059 886.500L1326 854.500 1326 851 1338 856.500 1327 863.500 1327 858.500z" fill="#fb2414" />
                        <g class="font-['Noto_Sans_CJK_SC',sans-serif] text-4xl italic">
                            <text x="1444" y="931" fill="#ff6633">野火</text>
                            <text x="1530" y="931" fill="#000" class="text-[40px] font-light">论坛</text>
                        </g>
                        <path d="M1515 878c16 11 17 33-1 41-5-3-2-8 1-13 4-6 3-13-3-20 8 4 10 8 8 14 3-9 1-15-5-22z" fill="#ff6633" />
                        <text x="1448" y="951" fill="#9097a2" class="font-['Liberation_Sans',sans-serif] text-base font-bold italic">www.proewildfire.cn</text>
                    </g>
                </svg>
            </main>
        </div>
    </div>
</body>

</html>
